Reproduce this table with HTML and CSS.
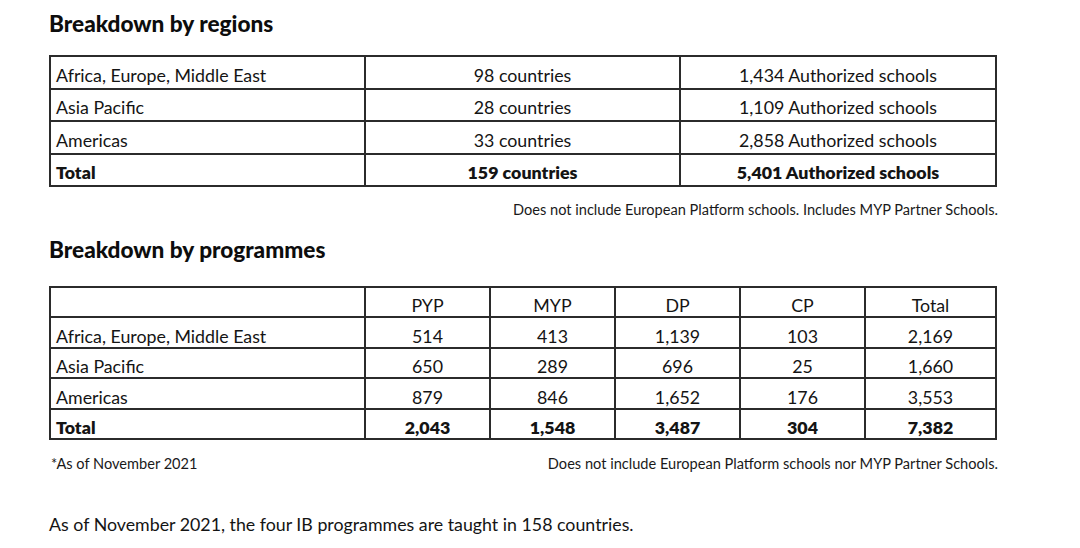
FILE: index.html
```html
<!DOCTYPE html>
<html lang="en">
<head>
<meta charset="utf-8">
<title>Breakdown</title>
<link rel="stylesheet" href="styles.css">
</head>
<body>
<main class="page">
  <h2 class="title title-first">Breakdown by regions</h2>
  <table class="grid regions">
    <colgroup><col class="c-name"><col class="c-mid"><col class="c-last"></colgroup>
    <tbody>
      <tr><td class="name">Africa, Europe, Middle East</td><td>98 countries</td><td>1,434 Authorized schools</td></tr>
      <tr><td class="name">Asia Pacific</td><td>28 countries</td><td>1,109 Authorized schools</td></tr>
      <tr><td class="name">Americas</td><td>33 countries</td><td>2,858 Authorized schools</td></tr>
      <tr class="total"><td class="name">Total</td><td>159 countries</td><td>5,401 Authorized schools</td></tr>
    </tbody>
  </table>
  <div class="notes notes-first">
    <span class="note-right">Does not include European Platform schools. Includes MYP Partner Schools.</span>
  </div>

  <h2 class="title title-second">Breakdown by programmes</h2>
  <table class="grid programmes">
    <colgroup><col class="p-name"><col class="p-num"><col class="p-num"><col class="p-num"><col class="p-num"><col class="p-tot"></colgroup>
    <tbody>
      <tr><td class="name"></td><td>PYP</td><td>MYP</td><td>DP</td><td>CP</td><td>Total</td></tr>
      <tr><td class="name">Africa, Europe, Middle East</td><td>514</td><td>413</td><td>1,139</td><td>103</td><td>2,169</td></tr>
      <tr><td class="name">Asia Pacific</td><td>650</td><td>289</td><td>696</td><td>25</td><td>1,660</td></tr>
      <tr><td class="name">Americas</td><td>879</td><td>846</td><td>1,652</td><td>176</td><td>3,553</td></tr>
      <tr class="total"><td class="name">Total</td><td>2,043</td><td>1,548</td><td>3,487</td><td>304</td><td>7,382</td></tr>
    </tbody>
  </table>
  <div class="notes notes-second">
    <span class="note-left">*As of November 2021</span>
    <span class="note-right">Does not include European Platform schools nor MYP Partner Schools.</span>
  </div>

  <p class="summary">As of November 2021, the four IB programmes are taught in 158 countries.</p>
</main>
</body>
</html>
```

FILE: styles.css
```css
html, body {
  margin: 0;
  padding: 0;
  background: #ffffff;
}

body {
  font-family: Lato, "Noto Sans", "Liberation Sans", sans-serif;
  color: #141414;
}

.page {
  width: 946px;
  padding-left: 49px;
  padding-top: 10px;
}

.title {
  margin: 0;
  font-size: 22.6px;
  font-weight: 900;
  line-height: 28px;
  color: #0d0d0d;
}

.title-first {
  margin-bottom: 17px;
}

.title-second {
  margin-top: 17px;
  margin-bottom: 22px;
}

.grid {
  width: 946px;
  border-collapse: collapse;
  table-layout: fixed;
  font-size: 17.8px;
}

.grid td {
  border: 2px solid #2b2b2b;
  text-align: center;
  padding: 0 5px;
  white-space: nowrap;
  overflow: hidden;
}

.grid td.name {
  text-align: left;
}

.regions td {
  height: 25px;
  line-height: 25px;
  padding-top: 5.5px;
}

.programmes td {
  height: 22px;
  line-height: 22px;
  padding-top: 6.4px;
}

.c-name { width: 315px; }
.c-mid { width: 315px; }
.c-last { width: 316px; }

.p-name { width: 315px; }
.p-num { width: 125px; }
.p-tot { width: 131px; }

.total td {
  font-weight: 800;
}

.notes {
  display: flex;
  justify-content: flex-end;
  align-items: center;
  font-size: 14.6px;
  line-height: 18px;
  color: #1a1a1a;
  margin-right: -3px;
}

.notes-first {
  margin-top: 14px;
}

.notes-second {
  justify-content: space-between;
  margin-top: 15px;
  padding-left: 2px;
}

.summary {
  margin: 40px 0 0;
  font-size: 17.8px;
  line-height: 22px;
  color: #141414;
}
```
